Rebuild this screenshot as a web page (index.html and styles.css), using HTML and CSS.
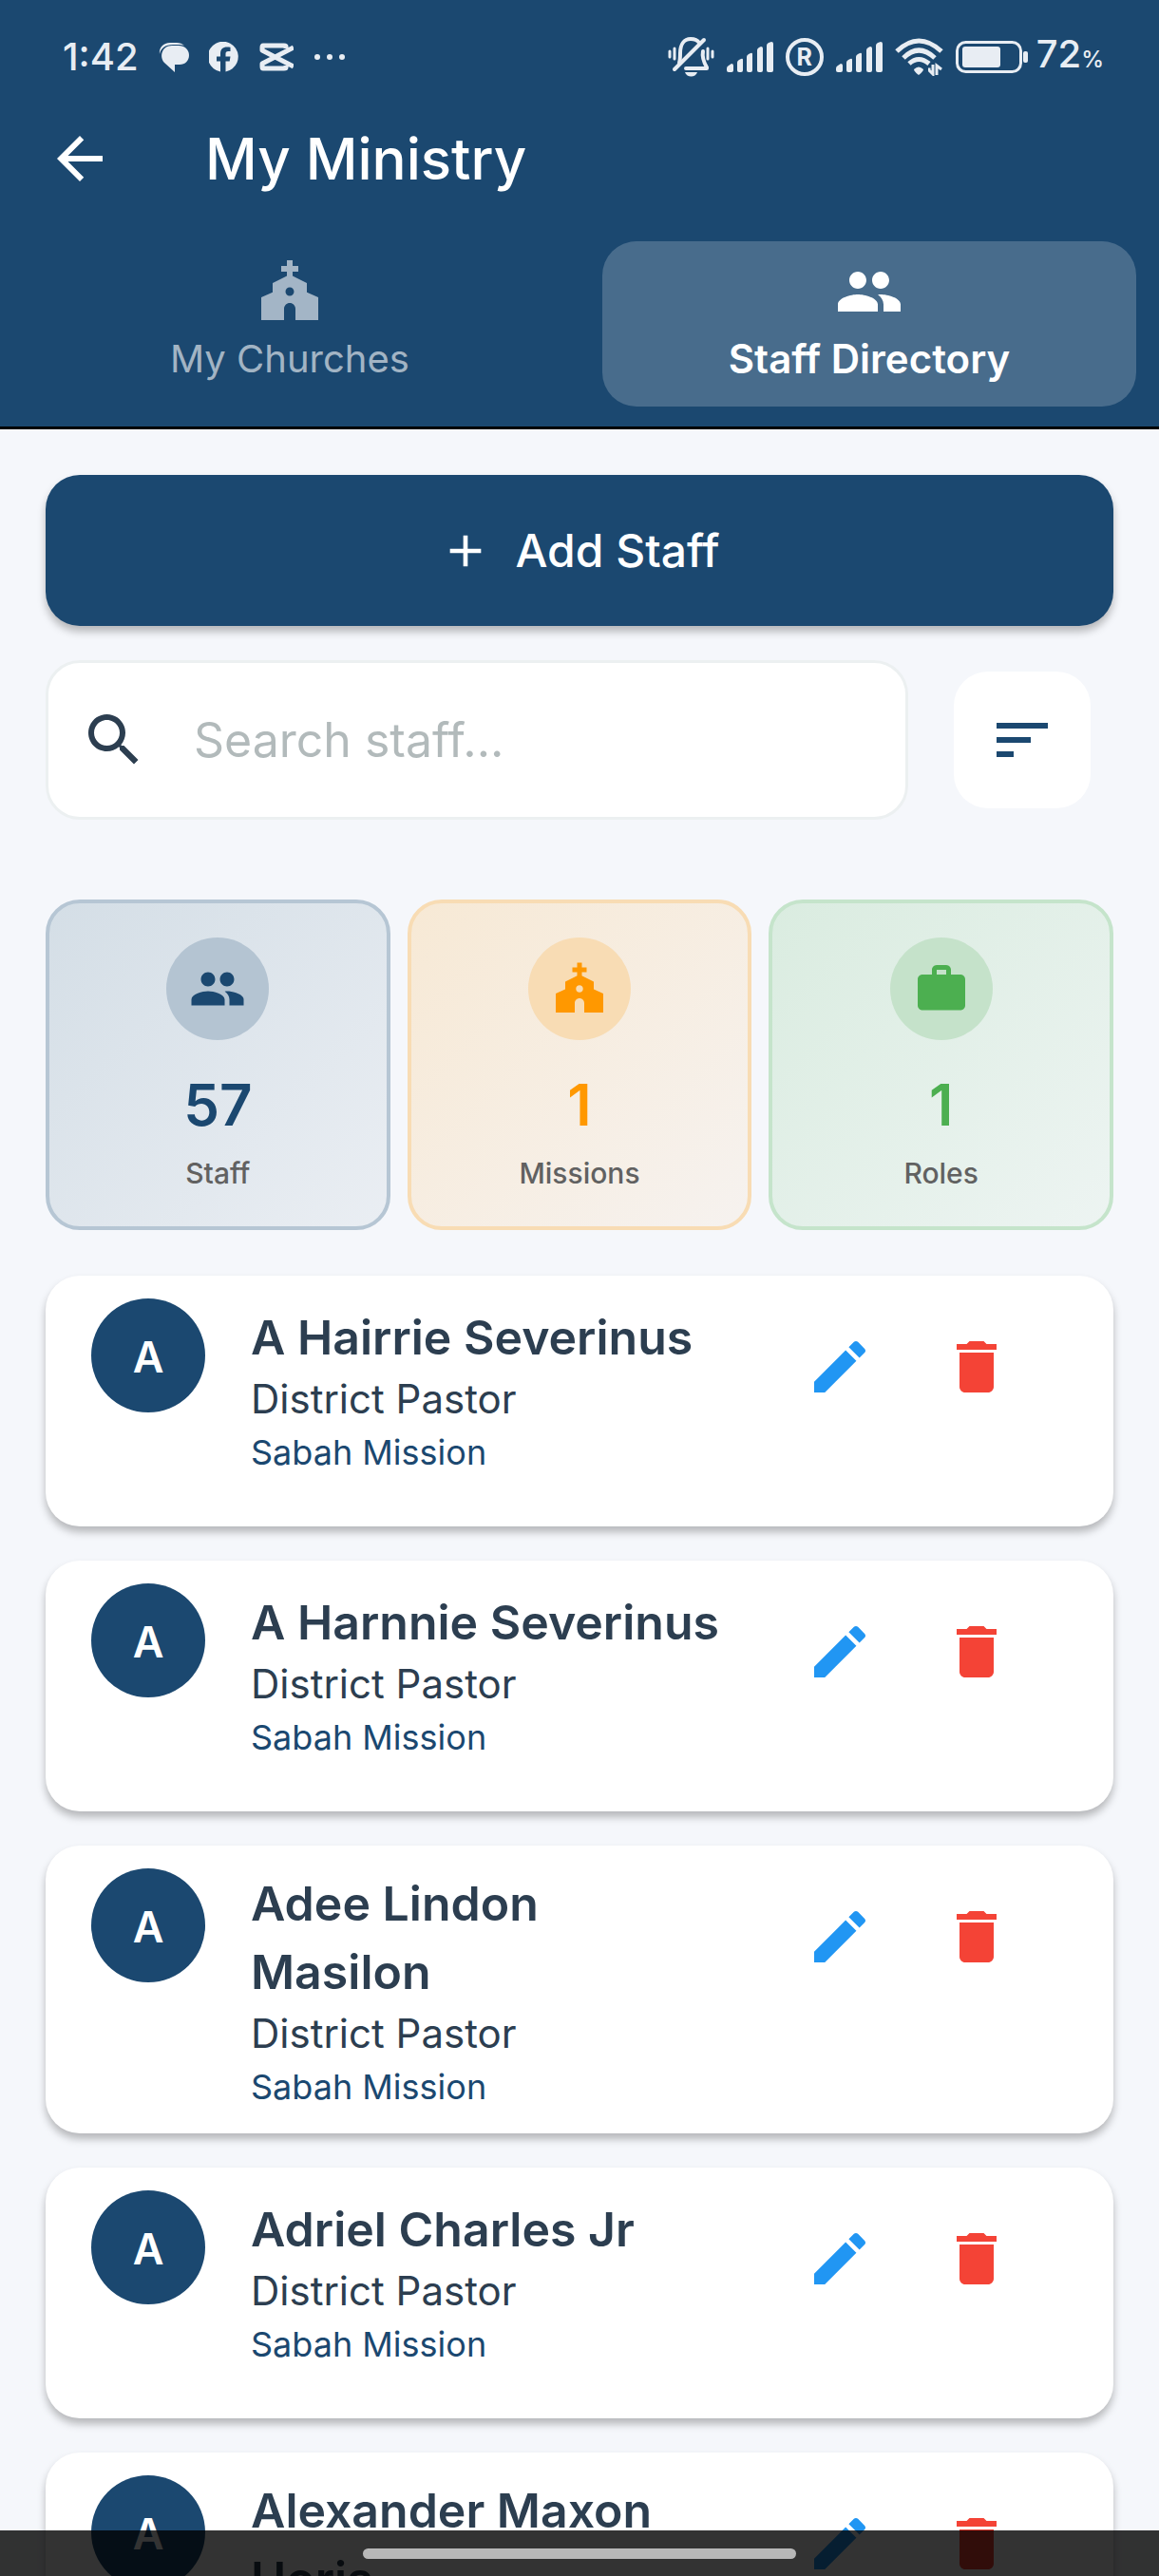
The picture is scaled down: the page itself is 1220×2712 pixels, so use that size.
FILE: index.html
```html
<!DOCTYPE html>
<html lang="en">
<head>
<meta charset="utf-8">
<meta name="viewport" content="width=device-width, initial-scale=1">
<title>My Ministry</title>
<link rel="stylesheet" href="styles.css">
</head>
<body>
<svg class="sprite" aria-hidden="true">
  <symbol id="back" viewBox="0 0 24 24"><path d="M20 11H7.83l5.59-5.59L12 4l-8 8 8 8 1.41-1.41L7.83 13H20v-2z"/></symbol>
  <symbol id="church" viewBox="0 0 24 24"><path fill-rule="evenodd" d="M18 12.22V9l-5-2.5V5h2V3h-2V1h-2v2H9v2h2v1.5L6 9v3.22L2 14v8h8v-4c0-1.1.9-2 2-2s2 .9 2 2v4h8v-8l-4-1.78zM12 13.5c-.83 0-1.5-.67-1.5-1.5s.67-1.5 1.5-1.5 1.5.67 1.5 1.5-.67 1.5-1.5 1.5z"/></symbol>
  <symbol id="people" viewBox="0 0 24 24"><path d="M16 11c1.66 0 2.99-1.34 2.99-3S17.66 5 16 5c-1.66 0-3 1.34-3 3s1.34 3 3 3zm-8 0c1.66 0 2.99-1.34 2.99-3S9.66 5 8 5C6.34 5 5 6.34 5 8s1.34 3 3 3zm0 2c-2.33 0-7 1.17-7 3.5V19h14v-2.5c0-2.33-4.67-3.5-7-3.5zm8 0c-.29 0-.62.02-.97.05 1.16.84 1.97 1.97 1.97 3.45V19h6v-2.5c0-2.33-4.67-3.5-7-3.5z"/></symbol>
  <symbol id="add" viewBox="0 0 24 24"><path d="M19 13h-6v6h-2v-6H5v-2h6V5h2v6h6v2z"/></symbol>
  <symbol id="search" viewBox="0 0 24 24"><path d="M15.5 14h-.79l-.28-.27C15.41 12.59 16 11.11 16 9.5 16 5.91 13.09 3 9.5 3S3 5.91 3 9.5 5.91 16 9.5 16c1.61 0 3.09-.59 4.23-1.57l.27.28v.79l5 4.99L20.49 19l-4.99-5zm-6 0C7.01 14 5 11.99 5 9.5S7.01 5 9.5 5 14 7.01 14 9.5 11.99 14 9.5 14z"/></symbol>
  <symbol id="sort" viewBox="0 0 24 24"><path d="M3 18h6v-2H3v2zM3 6v2h18V6H3zm0 7h12v-2H3v2z"/></symbol>
  <symbol id="work" viewBox="0 0 24 24"><path d="M20 6h-4V4c0-1.11-.89-2-2-2h-4c-1.11 0-2 .89-2 2v2H4c-1.11 0-1.99.89-1.99 2L2 19c0 1.11.89 2 2 2h16c1.11 0 2-.89 2-2V8c0-1.11-.89-2-2-2zm-6 0h-4V4h4v2z"/></symbol>
  <symbol id="edit" viewBox="0 0 24 24"><path d="M3 17.25V21h3.75L17.81 9.94l-3.75-3.75L3 17.25zM20.71 7.04c.39-.39.39-1.02 0-1.41l-2.34-2.34c-.39-.39-1.02-.39-1.41 0l-1.83 1.83 3.75 3.75 1.83-1.83z"/></symbol>
  <symbol id="delete" viewBox="0 0 24 24"><path d="M6 19c0 1.1.9 2 2 2h8c1.1 0 2-.9 2-2V7H6v12zM19 4h-3.5l-1-1h-5l-1 1H5v2h14V4z"/></symbol>
  <symbol id="signal" viewBox="0 0 49 32"><path d="M0 28q0-2 2-3l3-2q2 0 2 2v5q0 2-2 2H2q-2 0-2-2zM11 22q0-2 2-3l2-1q2-1 2 1v11q0 2-2 2h-2q-2 0-2-2zM21 16q0-2 2-3l2-1q2-1 2 1v17q0 2-2 2h-2q-2 0-2-2zM32 9q0-2 2-3l2-1q2 0 2 2v23q0 2-2 2h-2q-2 0-2-2zM42 4q0-2 2-3l3-1q2 0 2 2v28q0 2-2 2h-3q-2 0-2-2z"/></symbol>
</svg>

<div class="app">
  <header class="header">
    <div class="status">
      <div class="status-left">
        <span class="status-text">1:42</span>
        <svg width="32" height="32" viewBox="0 0 32 32" aria-hidden="true"><path d="M1 13C0 6 5 1 12 1h7c3 0 6 1 8 3-2-1-4-1-6-1h-6C7 3 2 7 1 13z"/><path d="M14 4h7c6 0 11 4 11 10s-4 10-10 10h-5v8L6 22C0 15 4 4 14 4z"/></svg>
        <svg width="32" height="32" viewBox="0 0 32 32" aria-hidden="true"><path d="M12 31.500V20.500H8v-5h4v-3c0-4.500 2.500-7 7-7 1.300 0 2.500.1 3.500.3v4.200h-2.300c-2 0-2.700 1-2.700 2.700v2.800h5l-.8 5h-4.200V31.500A16 16 0 1 0 12 31.500z"/></svg>
        <svg width="36" height="30" viewBox="0 0 36 30" aria-hidden="true"><path fill="none" stroke="currentColor" stroke-width="5" stroke-linejoin="round" d="M28 6V4Q28 3 26 3H4Q3 3 3 5v3l33 17M28 24v2q0 1-2 1H4q-1 0-1-2v-3L36 5"/></svg>
        <svg width="34" height="8" viewBox="0 0 34 8" aria-hidden="true"><circle cx="4" cy="4" r="3"/><circle cx="17" cy="4" r="3"/><circle cx="30" cy="4" r="3"/></svg>
      </div>
      <div class="status-right">
        <svg width="49" height="42" viewBox="0 0 49 42" aria-hidden="true"><g fill="none" stroke="currentColor" stroke-linecap="round"><path stroke-width="3" d="M2 15v6M7 12v11M47 15v6M42 12v11"/><path stroke-width="4" stroke-linejoin="round" d="M12 27c1-3 1-6 1-10C13 8 17 2 24 2c4 0 7 1 9 4M37 15c-1 5 0 10 4 17v1H19"/><path stroke-width="4" d="M38 3 7 34"/></g><path d="M18 37h13c-2 6-11 6-13 0z"/></svg>
        <svg width="49" height="32" aria-hidden="true"><use href="#signal"/></svg>
        <span class="roaming">R</span>
        <svg width="49" height="32" aria-hidden="true"><use href="#signal"/></svg>
        <svg width="51" height="40" viewBox="0 0 51 40" aria-hidden="true"><g fill="none" stroke="currentColor" stroke-width="5"><path d="M2 14Q25-8 49 14"/><path d="M9 21Q25 5 42 21"/><path d="M15 27Q25 18 36 27"/></g><path d="M20 33q5-5 10 0 0 2-5 6-5-4-5-6z"/><path fill="none" stroke="currentColor" stroke-width="3" d="M35 33h2.500M40 28v10l-4-4M44 39V29l5 4"/></svg>
        <svg width="76" height="34" viewBox="0 0 76 34" aria-hidden="true"><rect x="1.500" y="1.500" width="67" height="31" rx="9" fill="none" stroke="currentColor" stroke-width="3"/><rect x="7" y="6" width="40" height="22" rx="3"/><rect x="71" y="11" width="5" height="12" rx="2"/></svg>
        <span class="status-text">72<small>%</small></span>
      </div>
    </div>
    <div class="toolbar">
      <button class="icon-button back" aria-label="Back"><svg class="icon"><use href="#back"/></svg></button>
      <h1 class="title">My Ministry</h1>
    </div>
    <nav class="tabs">
      <button class="tab"><svg class="icon"><use href="#church"/></svg><span>My Churches</span></button>
      <button class="tab tab-active"><svg class="icon"><use href="#people"/></svg><span>Staff Directory</span></button>
    </nav>
  </header>

  <main class="content">
    <button class="add-button"><svg class="icon-add"><use href="#add"/></svg><span>Add Staff</span></button>

    <div class="search-row">
      <label class="search">
        <svg class="icon"><use href="#search"/></svg>
        <input type="text" placeholder="Search staff..." aria-label="Search staff">
      </label>
      <button class="icon-button filter" aria-label="Sort"><svg class="icon"><use href="#sort"/></svg></button>
    </div>

    <section class="stats">
      <div class="stat stat-blue"><span class="stat-icon"><svg><use href="#people"/></svg></span><strong>57</strong><span class="stat-label">Staff</span></div>
      <div class="stat stat-orange"><span class="stat-icon"><svg><use href="#church"/></svg></span><strong>1</strong><span class="stat-label">Missions</span></div>
      <div class="stat stat-green"><span class="stat-icon"><svg><use href="#work"/></svg></span><strong>1</strong><span class="stat-label">Roles</span></div>
    </section>

    <ul class="staff">
      <li class="card">
        <span class="avatar">A</span>
        <div class="info"><h2>A Hairrie Severinus</h2><p class="role">District Pastor</p><p class="mission">Sabah Mission</p></div>
        <div class="actions"><button class="icon-button edit" aria-label="Edit"><svg class="icon"><use href="#edit"/></svg></button><button class="icon-button delete" aria-label="Delete"><svg class="icon"><use href="#delete"/></svg></button></div>
      </li>
      <li class="card">
        <span class="avatar">A</span>
        <div class="info"><h2>A Harnnie Severinus</h2><p class="role">District Pastor</p><p class="mission">Sabah Mission</p></div>
        <div class="actions"><button class="icon-button edit" aria-label="Edit"><svg class="icon"><use href="#edit"/></svg></button><button class="icon-button delete" aria-label="Delete"><svg class="icon"><use href="#delete"/></svg></button></div>
      </li>
      <li class="card card-tall">
        <span class="avatar">A</span>
        <div class="info"><h2>Adee Lindon<br>Masilon</h2><p class="role">District Pastor</p><p class="mission">Sabah Mission</p></div>
        <div class="actions"><button class="icon-button edit" aria-label="Edit"><svg class="icon"><use href="#edit"/></svg></button><button class="icon-button delete" aria-label="Delete"><svg class="icon"><use href="#delete"/></svg></button></div>
      </li>
      <li class="card">
        <span class="avatar">A</span>
        <div class="info"><h2>Adriel Charles Jr</h2><p class="role">District Pastor</p><p class="mission">Sabah Mission</p></div>
        <div class="actions"><button class="icon-button edit" aria-label="Edit"><svg class="icon"><use href="#edit"/></svg></button><button class="icon-button delete" aria-label="Delete"><svg class="icon"><use href="#delete"/></svg></button></div>
      </li>
      <li class="card card-tall">
        <span class="avatar">A</span>
        <div class="info"><h2>Alexander Maxon<br>Horis</h2></div>
        <div class="actions"><button class="icon-button edit" aria-label="Edit"><svg class="icon"><use href="#edit"/></svg></button><button class="icon-button delete" aria-label="Delete"><svg class="icon"><use href="#delete"/></svg></button></div>
      </li>
    </ul>
  </main>
  <div class="nav-bar"><span class="nav-pill"></span></div>
</div>
</body>
</html>
```

FILE: styles.css
```css
:root {
  --navy: #1b4870;
  --ink: #2c3e50;
  --page: #f5f7fb;
}

* {
  box-sizing: border-box;
}

body {
  margin: 0;
  background: var(--page);
  color: var(--ink);
  font-family: Inter, "Noto Sans", sans-serif;
}

h1, h2, p, ul {
  margin: 0;
  padding: 0;
}

button {
  padding: 0;
  border: 0;
  background: none;
  color: inherit;
  font: inherit;
}

svg {
  display: block;
  flex: none;
  fill: currentColor;
}

.sprite {
  position: absolute;
  width: 0;
  height: 0;
}

.icon {
  width: 72px;
  height: 72px;
}

.icon-button {
  display: flex;
  flex: none;
  align-items: center;
  justify-content: center;
  width: 144px;
  height: 144px;
}

.app {
  height: 100vh;
  overflow: hidden;
}

.header {
  border-bottom: 3px solid #000;
  background: var(--navy);
  color: #fff;
}

.status {
  display: flex;
  align-items: center;
  justify-content: space-between;
  height: 104px;
  padding: 16px 58px 0 66px;
  color: #e8edf3;
}

.status-left,
.status-right {
  display: flex;
  align-items: center;
}

.status-left {
  gap: 21px;
}

.status-right {
  gap: 13px;
}

.status-text {
  font-size: 40px;
  font-weight: 500;
  line-height: 48px;
}

.status-right .status-text {
  margin-left: -4px;
}

.status-text small {
  font-size: 24px;
}

.roaming {
  display: flex;
  align-items: center;
  justify-content: center;
  width: 40px;
  height: 40px;
  border: 4px solid currentColor;
  border-radius: 50%;
  font-size: 25px;
  font-weight: 700;
  line-height: 32px;
}

.toolbar {
  display: flex;
  align-items: center;
  height: 126px;
  padding-left: 12px;
}

.title {
  margin-left: 60px;
  font-size: 60px;
  font-weight: 500;
  line-height: 72px;
}

.tabs {
  display: grid;
  grid-template-columns: 1fr 1fr;
  height: 219px;
}

.tab {
  display: flex;
  flex-direction: column;
  align-items: center;
  justify-content: center;
  gap: 11px;
  height: 174px;
  margin: 24px;
  padding-bottom: 10px;
  border-radius: 36px;
  color: rgba(255, 255, 255, .6);
  font-size: 40px;
  line-height: 48px;
}

.tab-active {
  background: rgba(255, 255, 255, .2);
  color: #fff;
  font-size: 42px;
  font-weight: 600;
}

.content {
  padding: 48px;
}

.add-button {
  display: flex;
  align-items: center;
  justify-content: center;
  gap: 24px;
  width: 100%;
  height: 159px;
  border-radius: 36px;
  background: var(--navy);
  box-shadow: 0 6px 9px rgba(0, 0, 0, .26);
  color: #fff;
  font-size: 48px;
  font-weight: 500;
}

.icon-add {
  width: 56px;
  height: 56px;
}

.search-row {
  display: flex;
  align-items: center;
  gap: 48px;
  margin-top: 36px;
  padding-right: 24px;
}

.search {
  display: flex;
  flex: 1;
  align-items: center;
  gap: 48px;
  min-width: 0;
  height: 168px;
  padding: 0 33px;
  border: 3px solid #ecf0f1;
  border-radius: 36px;
  background: #fff;
}

.search input {
  flex: 1;
  min-width: 0;
  padding: 0;
  border: 0;
  outline: 0;
  background: none;
  color: var(--ink);
  font: inherit;
  font-size: 50px;
  line-height: 72px;
}

.search input::placeholder {
  color: #b2babb;
  opacity: 1;
}

.filter {
  border-radius: 36px;
  background: #fff;
  color: var(--navy);
}

.stats {
  display: grid;
  grid-template-columns: repeat(3, 1fr);
  gap: 18px;
  margin-top: 84px;
}

.stat {
  display: flex;
  flex-direction: column;
  align-items: center;
  padding: 36px 12px;
  border: 4px solid;
  border-radius: 36px;
}

.stat-icon {
  display: flex;
  align-items: center;
  justify-content: center;
  width: 108px;
  height: 108px;
  border-radius: 50%;
}

.stat-icon svg {
  width: 60px;
  height: 60px;
}

.stat strong {
  margin-top: 32px;
  font-size: 60px;
  font-weight: 600;
  line-height: 72px;
}

.stat-label {
  margin-top: 16px;
  color: #616161;
  font-size: 30px;
  font-weight: 500;
  line-height: 40px;
}

.stat-blue {
  border-color: #b6c6d4;
  background: linear-gradient(135deg, #d4dee6, #eaeef3);
  color: var(--navy);
}

.stat-blue .stat-icon {
  background: #b4c4d2;
}

.stat-orange {
  border-color: #f8dcb4;
  background: linear-gradient(135deg, #f7e9d5, #f6f2ef);
  color: #ff9800;
}

.stat-orange .stat-icon {
  background: #f8dcb4;
}

.stat-green {
  border-color: #c5e4cb;
  background: linear-gradient(135deg, #daece0, #edf4f2);
  color: #4caf50;
}

.stat-green .stat-icon {
  background: #c5e2ca;
}

.staff {
  display: flex;
  flex-direction: column;
  gap: 36px;
  margin-top: 48px;
  list-style: none;
}

.card {
  display: flex;
  align-items: flex-start;
  gap: 48px;
  min-height: 264px;
  padding: 24px 72px 20px 48px;
  border-radius: 36px;
  background: #fff;
  box-shadow: 0 6px 9px rgba(0, 0, 0, .26);
}

.card-tall {
  min-height: 303px;
}

.avatar {
  display: flex;
  flex: none;
  align-items: center;
  justify-content: center;
  width: 120px;
  height: 120px;
  border-radius: 50%;
  background: var(--navy);
  color: #fff;
  font-size: 45px;
  font-weight: 600;
  padding-top: 2px;
}

.info {
  flex: 1;
  min-width: 0;
  padding-top: 5px;
}

.card-tall .info {
  padding-top: 1px;
}

.info h2 {
  font-size: 50px;
  font-weight: 600;
  line-height: 72px;
  white-space: nowrap;
}

.role {
  font-size: 42px;
  line-height: 58px;
}

.mission {
  color: var(--navy);
  font-size: 36px;
  line-height: 54px;
}

.actions {
  display: flex;
  flex: none;
}

.edit {
  color: #2196f3;
}

.delete {
  color: #f44336;
}

.nav-bar {
  position: fixed;
  right: 0;
  bottom: 0;
  left: 0;
  display: flex;
  align-items: center;
  justify-content: center;
  height: 48px;
  background: rgba(0, 0, 0, .8);
}

.nav-pill {
  width: 456px;
  height: 11px;
  border-radius: 6px;
  background: #b8b8b8;
}
```
